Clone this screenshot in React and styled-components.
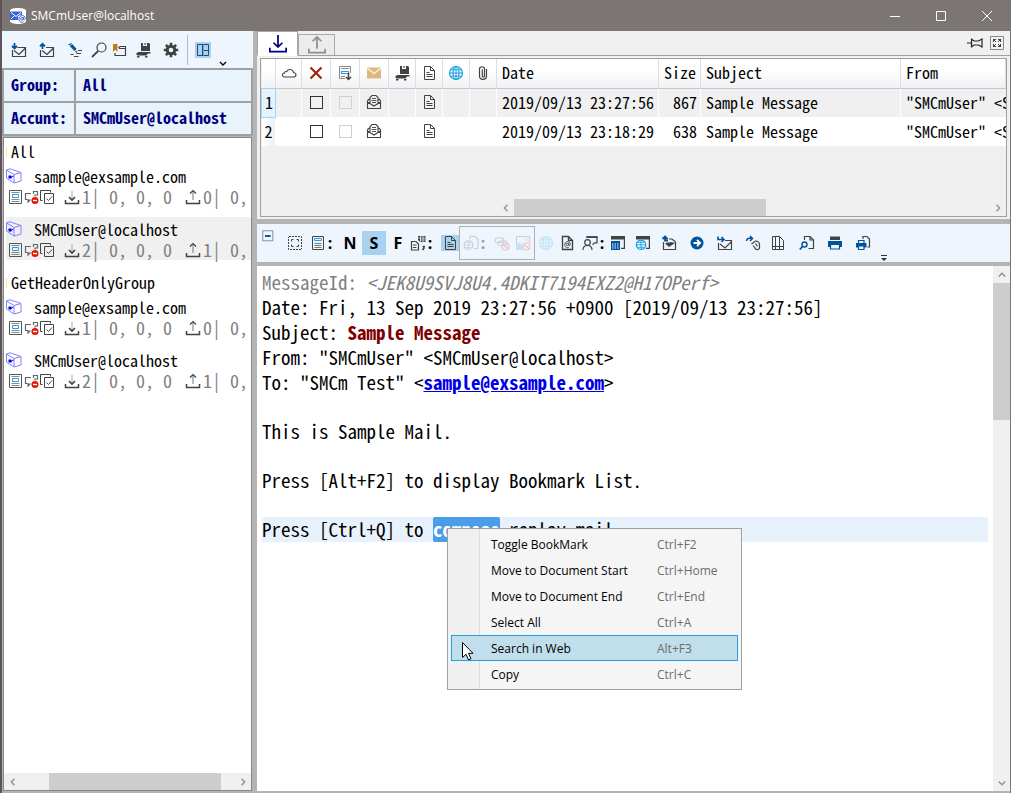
import styled, { createGlobalStyle, css } from "styled-components";

const ink = "#424242";
const blue = "#00539c";
const navy = "#000080";

/* ---------- icons ---------- */

const Svg = ({ size = 16, children, ...rest }) => (
  <svg width={size} height={size} viewBox="0 0 16 16" fill="none" stroke={ink} strokeWidth="1.2" aria-hidden="true" {...rest}>
    {children}
  </svg>
);

const icons = {
  receive: (
    <Svg>
      <path d="M6.5 5.5H14.5V14.5H1.5V8M3 8.5l5 4 6.5-6.5" />
      <path d="M3.5 1v5M1 4l2.5 2.5L6 4" stroke={blue} strokeWidth="1.8" />
    </Svg>
  ),
  send: (
    <Svg>
      <path d="M7 5.5H14.5V14.5H1.5V8M3 8.5l5 4 6.5-6.5" />
      <path d="M3.5 7V2M1 4.3l2.5-2.6L6 4.3" stroke={blue} strokeWidth="1.8" />
    </Svg>
  ),
  compose: (
    <Svg>
      <path d="M1.5 3l3-1.5" stroke={blue} />
      <path d="M4 3l4.5 5" stroke={blue} strokeWidth="3.2" />
      <path d="M8.5 9l1.5 1.5M11 8.5h4M3.500 12.500h3M9.500 11.500h4.500M7 14.500h4.500" />
    </Svg>
  ),
  search: (
    <Svg>
      <circle cx="10.500" cy="5.500" r="4.500" />
      <path d="M7.200 8.800L1 15" strokeWidth="1.800" />
    </Svg>
  ),
  bookmark: (
    <Svg>
      <path d="M8 6.500h6.500v7H4V11M7.500 6L9 4.500h5.500v2" />
      <path d="M2 2h4.500v8L4.200 7.800 2 10z" fill="#c27d1a" stroke="none" />
    </Svg>
  ),
  archive: (
    <Svg stroke="none" fill={ink}>
      <path d="M6 1h2v3h4V1h2l1 1v7H6zM9.500 1h1.200v2H9.500z" />
      <path d="M3 10h12.500v1.500H13L11.500 13.500H2.500L1 12zM2 14h2.500v1.500H2zM10 14h2.500v1.500H10z" />
    </Svg>
  ),
  gear: (
    <Svg>
      <circle cx="8" cy="8" r="3.800" strokeWidth="3" />
      <path d="M8 .8v3M8 12.200v3M.8 8h3M12.200 8h3M2.900 2.900l2.200 2.200M10.900 10.900l2.200 2.200M2.900 13.100l2.200-2.200M10.900 5.100l2.200-2.200" strokeWidth="2.600" />
    </Svg>
  ),
  layout: (
    <Svg stroke="#1e4c72" strokeWidth="1">
      <path d="M2.500 2.500h11v11h-11zM7.500 2.500v11M7.500 8.500h6" />
      <path d="M8.500 2.500v11" stroke="#7ba6c8" />
    </Svg>
  ),
  tabIn: (
    <Svg size={20} stroke={navy} strokeWidth="1.400">
      <path d="M1.500 11v3h13v-3M8 .8v9.500M4.500 7L8 10.500 11.500 7" />
    </Svg>
  ),
  tabOut: (
    <Svg size={20} stroke="#8e8e8e" strokeWidth="1.400">
      <path d="M1.500 11v3h13v-3M8 11V1.500M4.500 5L8 1.500 11.500 5" />
    </Svg>
  ),
  trayIn: (
    <Svg>
      <path d="M1.500 11v3.500h13V11" strokeWidth="1.500" />
      <path d="M8 2v8.500" strokeWidth="1" stroke="#aaa" />
      <path d="M5 8l3 3 3-3" strokeWidth="1.700" />
    </Svg>
  ),
  trayOut: (
    <Svg>
      <path d="M1.500 11v3.500h13V11" strokeWidth="1.500" />
      <path d="M8 2v9" strokeWidth="1" stroke="#777" />
      <path d="M5 4.500L8 1.500l3 3" />
    </Svg>
  ),
  pin: (
    <Svg stroke="#222">
      <path d="M0 8h4M4.500 3.500v9M5 4.500l2 1.500h4.500l3.500-2v8l-3.500-2H7l-2 1.500" />
    </Svg>
  ),
  expand: (
    <Svg strokeWidth="1">
      <path d="M1.500 1.500h13v13h-13z" stroke="#888" />
      <path d="M4.500 7V4.500H7M9 4.500h2.500V7M11.500 9v2.500H9M7 11.500H4.500V9M4 4l3 3M12 4L9 7M12 12L9 9M4 12l3-3" />
    </Svg>
  ),
  cloud: (
    <Svg>
      <path d="M3.800 12h8.700c3.500-.4 3-4.300.2-4.300C12 4 7 3.300 5.700 6.600 4.500 6.200 3.500 7 3.500 8 .5 8.500.8 12 3.800 12z" strokeWidth="1.100" />
    </Svg>
  ),
  cross: (
    <Svg stroke="#a1260d" strokeWidth="2.200">
      <path d="M2.500 2.500l11 11M13.500 2.500l-11 11" />
    </Svg>
  ),
  flagDown: (
    <Svg>
      <path d="M8 13.500H2.500v-12h11V8M4 3.500h8M4 11.500h4" stroke="#888" strokeWidth="1" />
      <path d="M4.500 6.500h7v2h-7z" stroke="#2a9edb" />
      <path d="M11.500 8v6.500M9 12l2.500 2.500L14 12" strokeWidth="1.500" />
    </Svg>
  ),
  mail: (
    <Svg stroke="none">
      <path d="M1 2.500h14v11H1z" fill="#dfb77c" />
      <path d="M1 3l7 5.500L15 3" stroke="#f8efe0" strokeWidth="1.400" />
    </Svg>
  ),
  page: (
    <Svg strokeWidth="1">
      <path d="M3.500 1.500h6l4 4v9h-10zM9.500 1.500v4h4M5.500 7.500h3M5.500 9.500h6M5.500 11.500h6" />
    </Svg>
  ),
  globe: (
    <Svg stroke="#1ba1e2">
      <circle cx="8" cy="8" r="6.500" />
      <ellipse cx="8" cy="8" rx="3" ry="6.500" />
      <path d="M8 1.500v13M1.500 8h13M2.500 4.800h11M2.500 11.200h11" strokeWidth="1" />
    </Svg>
  ),
  clip: (
    <Svg>
      <path d="M11.500 4v7c0 4.500-7 4.500-7 0V4c0-3 5-3 5 0v7c0 1.500-2.200 1.500-2.200 0V4.500" />
    </Svg>
  ),
  openMail: (
    <Svg strokeWidth="1.100">
      <path d="M1.500 6.500v8h13v-8M1.500 8l6.500 4 6.500-4M1.500 6.500l2-1.500M14.500 6.500l-2-1.500M4 9V3.500L6 1.500h4l2 2V9" />
      <path d="M6 4.500h4M5.500 6.500h5M6 8.500h4" strokeWidth=".9" />
    </Svg>
  ),
  list: (
    <Svg strokeWidth="1">
      <path d="M1.500 1.500h12v13h-12z" stroke="#555" />
      <path d="M3.500 3.500h8M3.500 10.500h8M3.500 12.500h8" stroke="#888" />
      <path d="M4.500 5.500h6v3h-6z" stroke="#2a9edb" />
    </Svg>
  ),
  news: (
    <Svg strokeWidth="1">
      <path d="M2.500 1.500h11v13h-11z" stroke="#444" />
      <path d="M4.500 8.500h7M4.500 10.500h7M4.500 12.500h7" stroke="#777" />
      <path d="M4.500 3.500h7v2h-7z" stroke="#2a9edb" />
    </Svg>
  ),
  blocked: (
    <Svg>
      <path d="M7 4.500H1.500v6H4v2.500l2.500-2.500M9.500 5V2.500h4V6h-2.500v1.500" stroke="#666" />
      <circle cx="11" cy="11.500" r="3.500" fill="#e51400" stroke="none" />
      <path d="M9 11.500h4" stroke="#fff" strokeWidth="1.400" />
    </Svg>
  ),
  checks: (
    <Svg strokeWidth="1">
      <path d="M4.500 4.500h9v10h-9zM2.500 11.500h-2v-10h10v2M6.500 9.500l2 2 3.500-4" stroke="#444" />
    </Svg>
  ),
  account: (
    <Svg stroke="#8080ff" strokeWidth="1">
      <path d="M.5 2L4 .8l11 3.700V13L8 15V6.500l7-2M.5 2L8 6.500M.5 2v8L8 15" />
      <path d="M2.500 7.500h3v3h-3zM5.500 10l2-2.500" fill="#0000e0" stroke="none" />
      <path d="M5 9.500L7.500 8" stroke="#0000e0" />
    </Svg>
  ),
  collapse: (
    <Svg size={14}>
      <path d="M2 2h11.500v11.500H2z" stroke="#8b95a0" />
      <path d="M4.500 8H11" stroke={blue} strokeWidth="2.200" />
    </Svg>
  ),
  fit: (
    <Svg strokeWidth="1">
      <path d="M2 1.500h12.500V14M14 14.500H1.500V2" strokeDasharray="2 1" />
      <path d="M4.500 6.500v-2h2M9.500 4.500h2v2M11.500 9.500v2h-2M6.500 11.500h-2v-2" />
    </Svg>
  ),
  docTable: (
    <Svg>
      <path d="M1.500 6.500h4.500l2.500 2.500v6h-7zM3 10h3.500M3 12.500h3.500" />
      <path d="M8 1h7.500v6H10L8 5z" fill={ink} stroke="none" />
      <path d="M8 3h7.500M10.500 1v6M13 1v6M10 5h5.500" stroke="#eef5fc" strokeWidth=".7" />
      <path d="M12.500 11.500h1.500v1.500l-1.500 2" strokeWidth="1.700" />
    </Svg>
  ),
  webDoc: (
    <Svg>
      <path d="M7 4V1.500h5l3 3v9H11" />
      <circle cx="5.500" cy="10" r="4.500" />
      <path d="M1 10h9M5.500 5.500v9M2 7.500h7M2 12.500h7" strokeWidth=".8" />
    </Svg>
  ),
  unlink: (
    <Svg>
      <rect x="1" y="3" width="9" height="4.500" rx="2.200" />
      <rect x="4" y="6" width="9" height="4.500" rx="2.200" />
      <circle cx="11.500" cy="11.500" r="3.500" stroke="#e51400" />
      <path d="M9 9l5 5" stroke="#e51400" />
    </Svg>
  ),
  noImage: (
    <Svg>
      <path d="M1.500 10V1.500h13V8" />
      <circle cx="11.500" cy="4.500" r="1.300" fill="#e8a33d" stroke="none" />
      <path d="M1 15v-5l3-3 4 4v4z" fill="#1ba1e2" stroke="none" />
      <circle cx="11.500" cy="11.500" r="3.500" stroke="#e51400" />
      <path d="M9 9l5 5" stroke="#e51400" />
    </Svg>
  ),
  atDoc: (
    <Svg>
      <path d="M3.500 1.500h6l4 4v9h-10zM9.500 1.500v4h4" strokeWidth="1.400" />
      <circle cx="8.300" cy="9.500" r="1.200" strokeWidth=".9" />
      <path d="M9.700 8v2.300c.5.800 1.600.4 1.600-1 0-3.600-5.600-3.600-5.600.3 0 3.200 3 3.600 4.500 2.700" strokeWidth=".9" />
    </Svg>
  ),
  person: (
    <Svg>
      <path d="M5 3V1.800h10v6H12.500l-2 2" />
      <path d="M4.500 2.200H15.500" strokeWidth="1.600" />
      <circle cx="5.500" cy="7.500" r="2.800" />
      <path d="M1 15c0-6 9-6 9 0" />
    </Svg>
  ),
  calWindow: (
    <Svg>
      <path d="M1 4.500V1h14v13h-4v-1.200h2.800V4.500z" fill={ink} stroke="none" />
      <path d="M1 6h9v9H1z" fill={blue} stroke="none" />
      <path d="M2 9h7M2 11h7M2 13h7" stroke="#eef5fc" strokeDasharray="1.500 1" />
    </Svg>
  ),
  webWindow: (
    <Svg>
      <path d="M1 4.500V1h14v13h-4v-1.200h2.800V4.500z" fill={ink} stroke="none" />
      <circle cx="6" cy="9.800" r="4.700" fill="#eef5fc" stroke="#1ba1e2" />
      <path d="M6 5v9.500M1.500 9.800h9M2.500 7.300h7M2.500 12.300h7" stroke="#1ba1e2" strokeWidth=".9" />
    </Svg>
  ),
  replyMail: (
    <Svg>
      <path d="M2.500 7v7.500h12V7L11 4H8" />
      <path d="M4 8.500C6 7 8 8 10 7l4 1-6 4z" fill={ink} stroke="none" />
      <path d="M7 5.500H4V2M1.500 4L4 1.500 6.500 4" stroke={blue} strokeWidth="1.800" />
    </Svg>
  ),
  next: (
    <Svg>
      <circle cx="8" cy="8" r="6.500" fill={blue} stroke="none" />
      <path d="M4.500 8h6.500M8 4.800L11.200 8 8 11.200" stroke="#fff" strokeWidth="1.800" />
    </Svg>
  ),
  forward: (
    <Svg>
      <path d="M8 5.500H14.500v9H1.500V8M3 9l5 4 6.500-6.500" />
      <path d="M1 1.500v3h5M4.500 2L7 4.500 4.500 7" stroke={blue} strokeWidth="1.600" />
    </Svg>
  ),
  attachNext: (
    <Svg>
      <path d="M1.500 6C1.500 3 4 3 7 3.500M5 1l2.500 2.500L5 6" stroke={blue} strokeWidth="1.500" />
      <path d="M6.500 9l4-3c3 0 4 2 4 4v3c-1 2.500-4 2-4.500 0L8 10.500M10.500 8.500l2 3" />
    </Svg>
  ),
  pageGrid: (
    <Svg strokeWidth="1">
      <path d="M2.500 1.500h7l4 4v9h-11zM5.500 1.500v13M2.500 11.500h11M9.500 1.500v13" />
    </Svg>
  ),
  findPage: (
    <Svg>
      <path d="M5.500 5V1.500h5.500l3.500 3.500v8.500H9.500M11 1.500V5h3.500" />
      <circle cx="5.500" cy="9.500" r="2.500" stroke={blue} strokeWidth="1.400" />
      <path d="M3.500 11.500L.8 14.500" stroke={blue} strokeWidth="1.800" />
    </Svg>
  ),
  print: (
    <Svg stroke="none">
      <path d="M3 1.500h10V5H3z" fill={ink} />
      <path d="M1 6h14v6H1z" fill={blue} />
      <path d="M3.500 9.500h9v4.500h-9z" fill="#eef5fc" stroke={blue} />
    </Svg>
  ),
  printPage: (
    <Svg>
      <path d="M8 4V1.500h4l2.500 2.500v8h-2" />
      <path d="M1 8h10.500v4.500H1z" fill={blue} stroke="none" />
      <path d="M3.500 8V5.500h5.500V8M3.500 11h5.500v3.500H3.500z" fill="#eef5fc" stroke={blue} />
    </Svg>
  ),
};

const AppLogo = () => (
  <svg width="18" height="18" viewBox="0 0 18 18" aria-hidden="true">
    <path d="M1 3.500C1 0 17 0 17 3.500v10.500C17 18 1 18 1 14z" fill="#fff" />
    <path d="M1 4.500h12v8.500H1z" fill="#3b62d8" />
    <path d="M2 5.500l5 4 5-4M2 12l3.200-3.200M12 12L8.800 8.800" stroke="#fff" fill="none" />
    <circle cx="13" cy="11.800" r="4" fill="#fff" />
    <circle cx="13" cy="11.800" r="1.300" stroke="#3b62d8" fill="none" />
    <path d="M14.500 10.300v2c.6.900 1.800.4 1.800-.8 0-4-6.300-4-6.300.6 0 3.200 3 3.600 4.700 2.700" stroke="#3b62d8" fill="none" />
  </svg>
);

/* ---------- shell ---------- */

const GlobalStyle = createGlobalStyle`
  * {
    box-sizing: border-box;
  }
  body {
    margin: 0;
    font-family: "Open Sans", sans-serif;
    font-size: 12px;
    color: #000;
  }
  button {
    font: inherit;
    color: inherit;
    background: none;
    border: none;
    padding: 0;
  }
  svg {
    display: block;
    flex: none;
  }
`;

const mono = css`
  font-family: "Noto Sans Mono CJK JP", "Liberation Mono", monospace;
`;

const Window = styled.div`
  display: flex;
  flex-direction: column;
  height: 100vh;
  background: #b4b4b4;
  border-left: 2px solid #5f5358;
  border-right: 1px solid #7b7573;
`;

const TitleBar = styled.header`
  display: flex;
  align-items: center;
  flex: none;
  height: 31px;
  padding-left: 7px;
  background: #7b7573;
  color: #fff;

  h1 {
    flex: 1;
    margin: 0 0 0 4px;
    font-size: 12px;
    font-weight: 400;
  }
`;

const CaptionButton = styled.button`
  display: grid;
  place-items: center;
  width: 46px;
  height: 31px;
`;

const Body = styled.main`
  display: grid;
  grid-template-columns: 251px minmax(0, 1fr);
  gap: 4px;
  flex: 1;
  min-height: 0;
`;

const Column = styled.section`
  display: flex;
  flex-direction: column;
  min-width: 0;
  min-height: 0;
`;

const MessagePane = styled(Column)`
  flex: 1;
  margin-top: 5px;
`;

const Toolbar = styled.div`
  display: flex;
  align-items: center;
  flex: none;
  height: ${({ $height }) => $height}px;
  padding-left: 3px;
  background: #eef5fc;
`;

const ToolButton = styled.button`
  display: flex;
  align-items: center;
  justify-content: center;
  width: ${({ $width = 16 }) => $width}px;
  height: ${({ $height = 24 }) => $height}px;
  margin-left: ${({ $gap = 0 }) => $gap}px;
  opacity: ${({ disabled }) => (disabled ? 0.2 : 1)};
  background: ${({ $on }) => ($on ? "#a8d2f0" : "none")};
  font-weight: 700;
  font-size: 16px;
  align-self: ${({ $top }) => ($top ? "flex-start" : "center")};
`;

const Colon = styled.span`
  width: 8px;
  text-align: center;
  font-size: 16px;
  font-weight: 700;
  color: ${({ $dim }) => ($dim ? "#999" : "#000")};
`;

const Divider = styled.span`
  width: 1px;
  height: 30px;
  margin: 0 7px 0 2px;
  background: #b5b9c0;
`;

const Overflow = styled.button`
  align-self: flex-end;
  width: 16px;
  height: 8px;
  margin-left: ${({ $gap }) => $gap}px;
`;

/* ---------- left side ---------- */

const Summary = styled.table`
  ${mono};
  flex: none;
  width: 100%;
  border-collapse: collapse;
  background: #e8f3fc;
  color: ${navy};
  font-size: 16px;
  line-height: 20px;

  th,
  td {
    height: 33px;
    padding: 0 7px 3px;
    border: 2px solid #a0a0a0;
    text-align: left;
    font-weight: 700;
  }
  th {
    width: 72px;
    padding-right: 0;
  }
`;

const Tree = styled.nav`
  display: flex;
  flex-direction: column;
  flex: 1;
  min-height: 0;
  margin: 1px 1px 2px;
  border: 1px solid #828790;
  background: #fff;
`;

const TreeBody = styled.div`
  ${mono};
  flex: 1;
  overflow: hidden;
  padding: 1px 0 0 2px;
  font-size: 16px;
  white-space: pre;
`;

const GroupName = styled.div`
  height: 25px;
  padding-left: 5px;
  background: linear-gradient(#ffe08a, #ffe08a) 0 8px / 1px 10px no-repeat;
  line-height: 25px;
`;

const AccountItem = styled.div`
  height: 43px;
  margin-bottom: 10px;
  background: ${({ $selected }) => ($selected ? "#f0f0f0" : "#fff")};
`;

const AccountName = styled.div`
  display: flex;
  align-items: center;
  gap: 12px;
  height: 23px;
`;

const Stats = styled.div`
  display: flex;
  align-items: center;
  height: 20px;
  padding-left: 2px;
  color: #808080;
  font-size: 18px;
  line-height: 18px;

  svg:nth-of-type(4) {
    margin-left: 8px;
  }
  span {
    margin: 0 4px 0 2px;
    padding-bottom: 3px;
  }
`;

/* ---------- scroll bars ---------- */

const Bar = styled.div`
  display: flex;
  flex: none;
  flex-direction: ${({ $vertical }) => ($vertical ? "column" : "row")};
  ${({ $vertical }) => ($vertical ? "width: 17px" : "height: 17px")};
  background: #f0f0f0;
`;

const Arrow = styled.button`
  display: grid;
  place-items: center;
  width: 17px;
  height: 17px;

  svg {
    transform: rotate(${({ $turn }) => $turn}deg);
  }
`;

const Track = styled.div`
  display: flex;
  flex: 1;
  flex-direction: inherit;
`;

const Thumb = styled.div`
  flex: 0 0 ${({ $size }) => $size}%;
  background: #cdcdcd;
`;

const Space = styled.div`
  flex: 0 0 ${({ $size }) => $size}%;
`;

const ScrollBar = ({ vertical, start, size }) => {
  const arrow = (
    <svg width="8" height="8" viewBox="0 0 8 8" fill="none" stroke="#909090" strokeWidth="1.400">
      <path d="M5.500 .8L2.300 4l3.200 3.200" />
    </svg>
  );
  return (
    <Bar $vertical={vertical}>
      <Arrow $turn={vertical ? 90 : 0} aria-label="Scroll back">{arrow}</Arrow>
      <Track>
        <Space $size={start} />
        <Thumb $size={size} />
      </Track>
      <Arrow $turn={vertical ? 270 : 180} aria-label="Scroll forward">{arrow}</Arrow>
    </Bar>
  );
};

/* ---------- message list ---------- */

const ListPanel = styled.div`
  display: flex;
  flex-direction: column;
  flex: none;
  height: 188px;
  padding: 0 3px 2px;
  background: #f0f0f0;
`;

const TabBar = styled.div`
  display: flex;
  align-items: flex-end;
  gap: 6px;
  flex: none;
  height: 25px;
  margin: 0 -3px 2px;
  padding-right: 5px;
  border-bottom: 1px solid #a0a0a0;
`;

const Tab = styled.button`
  display: grid;
  place-items: center;
  width: ${({ $active }) => ($active ? 41 : 37)}px;
  height: ${({ $active }) => ($active ? 25 : 22)}px;
  margin: 0 ${({ $active }) => ($active ? "-6px" : "auto")} -1px 0;
  border: 1px solid #a8a8a8;
  border-bottom-color: ${({ $active }) => ($active ? "#fff" : "#a0a0a0")};
  background: ${({ $active }) => ($active ? "#fff" : "#ececec")};
`;

const PanelButton = styled.button`
  align-self: center;
`;

const GridFrame = styled.div`
  display: flex;
  flex-direction: column;
  flex: 1;
  min-height: 0;
  border: 1px solid #a0a0a0;
`;

const GridBody = styled.div`
  flex: 1;
  overflow: hidden;
`;

const Grid = styled.table`
  ${mono};
  width: 100%;
  table-layout: fixed;
  border-collapse: collapse;
  font-size: 16px;
  line-height: 20px;
  white-space: nowrap;

  th,
  td {
    height: 29px;
    padding: 0 3px 2px 5px;
    overflow: hidden;
    border-right: 1px solid #fff;
    text-align: left;
    font-weight: 400;
  }
  td:last-child {
    padding-right: 0;
    border-right: none;
  }
  thead th {
    border-right-color: #dcdee2;
    border-bottom: 1px solid #c8c8c8;
    background: linear-gradient(#fff 40%, #eef0f4);
  }
  tbody tr {
    background: #fff;
  }
  tbody tr:first-child {
    background: #f0f0f0;
  }
  tbody th {
    padding: 0 0 2px 3px;
    background: linear-gradient(90deg, #fff, #eaf0f5);
  }
  tbody tr:first-child th {
    border: 1px solid #9fd8f0;
    background: #e4f4fc;
  }
  .number {
    text-align: right;
  }
  .icon {
    padding: 0 0 1px;
  }
  .icon > * {
    margin: 0 auto;
  }
`;

const Col = styled.col`
  width: ${({ $width }) => $width}px;
`;

const GridCheck = styled.input.attrs({ type: "checkbox" })`
  appearance: none;
  display: block;
  width: 13px;
  height: 13px;
  border: 1px solid ${({ $faint }) => ($faint ? "#d0d0d0" : "#333")};
`;

const ScrollSlot = styled.div`
  display: grid;
  margin-left: 236px;
`;

/* ---------- message ---------- */

const ButtonBox = styled.div`
  display: flex;
  align-items: center;
  width: 76px;
  height: 34px;
  padding-left: 3px;
  border: 1px solid #b0b0b0;
`;

const Doc = styled.div`
  position: relative;
  display: flex;
  flex: 1;
  min-height: 0;
  margin-top: 4px;
  border-bottom: 2px solid #b4b4b4;
  background: #fff;
`;

const DocText = styled.article`
  ${mono};
  flex: 1;
  min-width: 0;
  overflow: hidden;
  padding: 4px 5px 0;
  font-size: 19px;
  white-space: pre;
`;

const Line = styled.div`
  height: ${({ $blank }) => ($blank ? 24 : 25)}px;
  line-height: 23px;
  color: ${({ $muted }) => ($muted ? "#808080" : "#000")};
  background: ${({ $current }) => ($current ? "#e8f2fc" : "none")};

  strong {
    color: #800000;
  }
  a {
    color: #0000e6;
    font-weight: 700;
  }
`;

const Picked = styled.mark`
  display: inline-block;
  padding-bottom: 2px;
  border-radius: 2px;
  background: #4a9de6;
  color: #fff;
  font-weight: 700;
`;

const Menu = styled.div`
  position: absolute;
  left: 190px;
  top: 262px;
  width: 295px;
  padding: 2px 3px;
  border: 1px solid #a0a0a0;
  background: linear-gradient(90deg, #f0f0f0 31px, #dcdcdc 31px, #dcdcdc 32px, #f5f5f5 32px);
`;

const MenuItem = styled.button`
  display: grid;
  grid-template-columns: 166px 1fr;
  align-items: center;
  width: 100%;
  height: 26px;
  padding-left: 39px;
  border: 1px solid ${({ $hover }) => ($hover ? "#26a0da" : "transparent")};
  background: ${({ $hover }) => ($hover ? "#c0deeb" : "none")};
  text-align: left;

  span:last-child {
    color: #6d6d6d;
  }
`;

const Pointer = styled.svg`
  position: absolute;
  left: 13px;
  top: 112px;
`;

/* ---------- data ---------- */

const groups = [
  {
    name: "All",
    accounts: [
      { name: "sample@exsample.com", received: 1, sent: 0 },
      { name: "SMCmUser@localhost", received: 2, sent: 1, selected: true },
    ],
  },
  {
    name: "GetHeaderOnlyGroup",
    accounts: [
      { name: "sample@exsample.com", received: 1, sent: 0 },
      { name: "SMCmUser@localhost", received: 2, sent: 1 },
    ],
  },
];

const mainTools = [
  ["receive", 28],
  ["send", 28],
  ["compose", 28],
  ["search", 20],
  ["bookmark", 20],
  ["archive", 28],
  ["gear", 28],
];

const viewTools = [
  ["atDoc", 5],
  ["person", 7],
];

const mailTools = [
  ["calWindow", 4],
  ["webWindow", 9],
  ["replyMail", 10],
  ["next", 12],
  ["forward", 12],
  ["attachNext", 12],
  ["pageGrid", 9],
  ["findPage", 13],
  ["print", 12],
  ["printPage", 12],
];

const iconColumns = ["cloud", "cross", "flagDown", "mail", "archive", "page", "globe", "clip"];
const columnWidths = [14, 26, 29, 29, 29, 27, 27, 27, 27, 162, 42, 200];

const messages = [
  { date: "2019/09/13 23:27:56", size: 867, subject: "Sample Message", from: '"SMCmUser" <SMCmUser@localhost>' },
  { date: "2019/09/13 23:18:29", size: 638, subject: "Sample Message", from: '"SMCmUser" <SMCmUser@localhost>' },
];

const menuItems = [
  ["Toggle BookMark", "Ctrl+F2"],
  ["Move to Document Start", "Ctrl+Home"],
  ["Move to Document End", "Ctrl+End"],
  ["Select All", "Ctrl+A"],
  ["Search in Web", "Alt+F3"],
  ["Copy", "Ctrl+C"],
];

const captionButtons = [
  ["Minimize", "M1 6.500h10"],
  ["Maximize", "M1.500 1.500h9v9h-9z"],
  ["Close", "M1 1l10 10M11 1L1 11"],
];

/* ---------- parts ---------- */

const Sidebar = () => (
  <Column>
    <Toolbar $height={37}>
      {mainTools.map(([name, width]) => (
        <ToolButton key={name} $width={width} aria-label={name}>{icons[name]}</ToolButton>
      ))}
      <Divider />
      <ToolButton $on $height={16} aria-label="layout">{icons.layout}</ToolButton>
      <Overflow $gap={4} aria-label="More">
        <svg width="16" height="6" viewBox="0 0 16 6" fill="none" stroke="#000" strokeWidth="1.300">
          <path d="M5 1l3 3 3-3" />
        </svg>
      </Overflow>
    </Toolbar>
    <Summary>
      <tbody>
        <tr><th>Group:</th><td>All</td></tr>
        <tr><th>Accunt:</th><td>SMCmUser@localhost</td></tr>
      </tbody>
    </Summary>
    <Tree>
      <TreeBody>
        {groups.map((group) => (
          <div key={group.name}>
            <GroupName>{group.name}</GroupName>
            {group.accounts.map((account) => (
              <AccountItem key={account.name} $selected={account.selected}>
                <AccountName>
                  {icons.account}
                  {account.name}
                </AccountName>
                <Stats>
                  {icons.list}
                  {icons.blocked}
                  {icons.checks}
                  {icons.trayIn}
                  <span>{account.received}| 0, 0, 0 </span>
                  {icons.trayOut}
                  <span>{account.sent}| 0,</span>
                </Stats>
              </AccountItem>
            ))}
          </div>
        ))}
      </TreeBody>
      <ScrollBar start={13} size={81} />
    </Tree>
  </Column>
);

const MessageList = () => (
  <ListPanel>
    <TabBar>
      <Tab $active aria-label="Received">{icons.tabIn}</Tab>
      <Tab aria-label="Sent">{icons.tabOut}</Tab>
      <PanelButton aria-label="Pin">{icons.pin}</PanelButton>
      <PanelButton aria-label="Expand">{icons.expand}</PanelButton>
    </TabBar>
    <GridFrame>
      <GridBody>
        <Grid>
          <colgroup>
            {columnWidths.map((width, i) => <Col key={i} $width={width} />)}
            <col />
          </colgroup>
          <thead>
            <tr>
              <th aria-label="Number" />
              {iconColumns.map((name) => <th key={name} className="icon">{icons[name]}</th>)}
              <th>Date</th>
              <th>Size</th>
              <th>Subject</th>
              <th>From</th>
            </tr>
          </thead>
          <tbody>
            {messages.map((message, i) => (
              <tr key={message.date}>
                <th>{i + 1}</th>
                <td />
                <td className="icon"><GridCheck aria-label="Delete" /></td>
                <td className="icon"><GridCheck $faint aria-label="Get body" /></td>
                <td className="icon">{icons.openMail}</td>
                <td />
                <td className="icon">{icons.page}</td>
                <td />
                <td />
                <td>{message.date}</td>
                <td className="number">{message.size}</td>
                <td>{message.subject}</td>
                <td>{message.from}</td>
              </tr>
            ))}
          </tbody>
        </Grid>
      </GridBody>
      <ScrollSlot>
        <ScrollBar start={0} size={53} />
      </ScrollSlot>
    </GridFrame>
  </ListPanel>
);

const MessageToolbar = () => (
  <Toolbar $height={38}>
    <ToolButton $top aria-label="Collapse">{icons.collapse}</ToolButton>
    <ToolButton $gap={11} aria-label="Fit">{icons.fit}</ToolButton>
    <ToolButton $gap={7} aria-label="Header">{icons.news}</ToolButton>
    <Colon>:</Colon>
    <ToolButton $gap={4} $width={24}>N</ToolButton>
    <ToolButton $on $width={24}>S</ToolButton>
    <ToolButton $width={24}>F</ToolButton>
    <ToolButton aria-label="Parts">{icons.docTable}</ToolButton>
    <Colon>:</Colon>
    <ToolButton $on $gap={7} $width={18} $height={16} aria-label="Text">{icons.page}</ToolButton>
    <ButtonBox>
      <ToolButton disabled aria-label="Html">{icons.webDoc}</ToolButton>
      <Colon $dim>:</Colon>
      <ToolButton $gap={7} disabled aria-label="Links">{icons.unlink}</ToolButton>
      <ToolButton $gap={5} disabled aria-label="Images">{icons.noImage}</ToolButton>
    </ButtonBox>
    <ToolButton $gap={3} disabled aria-label="Browser">{icons.globe}</ToolButton>
    {viewTools.map(([name, gap]) => (
      <ToolButton key={name} $gap={gap} aria-label={name}>{icons[name]}</ToolButton>
    ))}
    <Colon>:</Colon>
    {mailTools.map(([name, gap]) => (
      <ToolButton key={name} $gap={gap} aria-label={name}>{icons[name]}</ToolButton>
    ))}
    <Overflow $gap={5} aria-label="More">
      <svg width="16" height="7" viewBox="0 0 16 7">
        <path d="M5 0h6v1H5zM5 3h6L8 6z" fill="#333" />
      </svg>
    </Overflow>
  </Toolbar>
);

const ContextMenu = () => (
  <Menu>
    {menuItems.map(([label, keys]) => (
      <MenuItem key={label} $hover={label === "Search in Web"}>
        <span>{label}</span>
        <span>{keys}</span>
      </MenuItem>
    ))}
    <Pointer width="14" height="20" viewBox="0 0 14 20" fill="#fff" stroke="#000">
      <path d="M1.500 1.500v15l3.500-3.200 2.500 5.500 2.500-1-2.500-5.500h4.500z" />
    </Pointer>
  </Menu>
);

const Message = () => (
  <Doc>
    <DocText>
      <Line $muted>MessageId: <em>&lt;JEK8U9SVJ8U4.4DKIT7194EXZ2@H17OPerf&gt;</em></Line>
      <Line>Date: Fri, 13 Sep 2019 23:27:56 +0900 [2019/09/13 23:27:56]</Line>
      <Line>Subject: <strong>Sample Message</strong></Line>
      <Line>From: "SMCmUser" &lt;SMCmUser@localhost&gt;</Line>
      <Line>To: "SMCm Test" &lt;<a href="mailto:sample@exsample.com">sample@exsample.com</a>&gt;</Line>
      <Line $blank />
      <Line>This is Sample Mail.</Line>
      <Line $blank />
      <Line>Press [Alt+F2] to display Bookmark List.</Line>
      <Line $blank />
      <Line $current>Press [Ctrl+Q] to <Picked>compose</Picked> replay mail.</Line>
    </DocText>
    <ScrollBar vertical start={0} size={28} />
    <ContextMenu />
  </Doc>
);

const App = () => (
  <Window>
    <GlobalStyle />
    <TitleBar>
      <AppLogo />
      <h1>SMCmUser@localhost</h1>
      {captionButtons.map(([label, d]) => (
        <CaptionButton key={label} aria-label={label}>
          <svg width="12" height="12" viewBox="0 0 12 12" fill="none" stroke="#fff">
            <path d={d} />
          </svg>
        </CaptionButton>
      ))}
    </TitleBar>
    <Body>
      <Sidebar />
      <Column>
        <MessageList />
        <MessagePane>
          <MessageToolbar />
          <Message />
        </MessagePane>
      </Column>
    </Body>
  </Window>
);

export default App;
